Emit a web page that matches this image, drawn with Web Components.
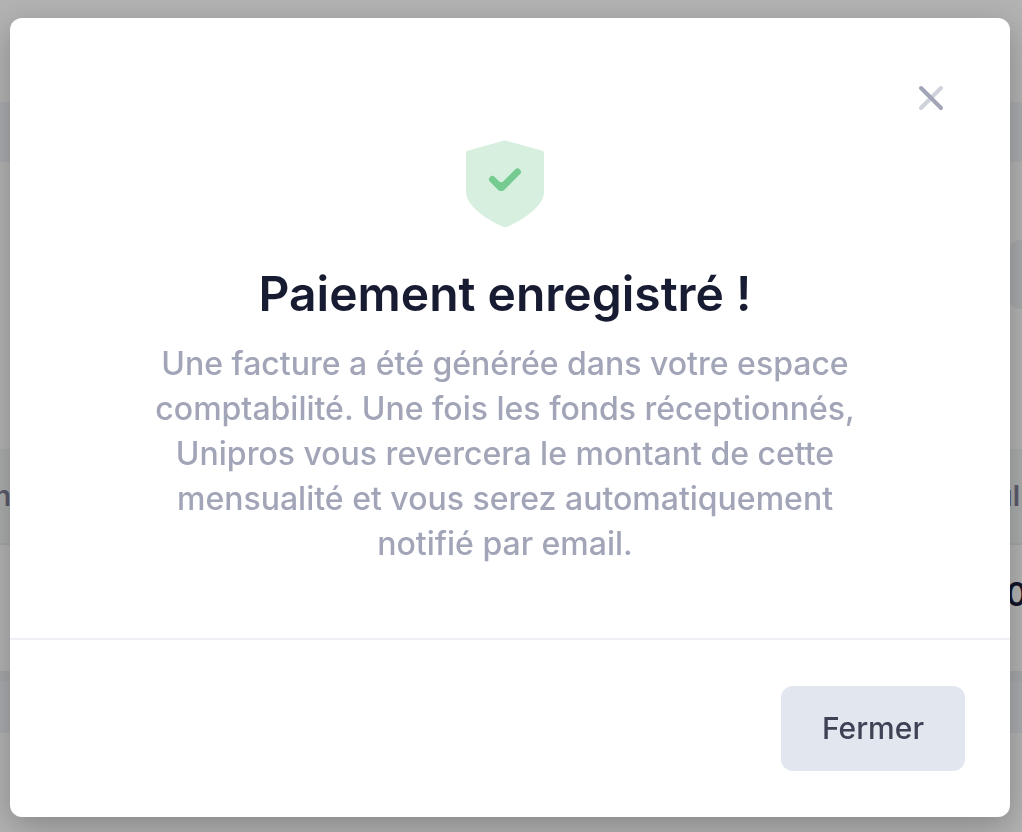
<!DOCTYPE html>
<html lang="fr">
<head>
<meta charset="utf-8">
<meta name="viewport" content="width=device-width, initial-scale=1">
<title>Paiement enregistré</title>
<style>
	body {
		margin: 0;
		min-height: 100vh;
		overflow: hidden;
		font-family: Inter, "Open Sans", "Liberation Sans", sans-serif;
		background: #b3b3b3;
	}
</style>
</head>
<body>
<page-backdrop></page-backdrop>
<payment-modal>
	<span slot="title">Paiement enregistré !</span>
	<span slot="message">Une facture a été générée dans votre espace comptabilité. Une fois les fonds réceptionnés, Unipros vous revercera le montant de cette mensualité et vous serez automatiquement notifié par email.</span>
	<modal-button slot="actions">Fermer</modal-button>
</payment-modal>

<script>
class PageBackdrop extends HTMLElement {
	constructor() {
		super();
		this.attachShadow({ mode: "open" });
	}

	connectedCallback() {
		this.shadowRoot.innerHTML = `
		<style>
		:host {
			display: flex;
			flex-direction: column;
			height: 100vh;
			overflow: hidden;
		}
		.top { height: 102px; }
		.band { height: 60px; background: #a9abae; }
		.filters {
			display: flex;
			justify-content: flex-end;
			height: 209px;
			padding-top: 78px;
		}
		.pill {
			width: 14px;
			height: 69px;
			border-radius: 12px 0 0 12px;
			background: #a8aaac;
		}
		.row {
			display: flex;
			align-items: center;
			justify-content: space-between;
			box-sizing: border-box;
		}
		.head {
			height: 96px;
			border-bottom: 2px solid #a5a7a7;
			background: #abadac;
			color: #5b5a6c;
			font-size: 28px;
			font-weight: 600;
		}
		.first { margin-left: -6px; }
		.last { margin-right: 2px; }
		.line {
			height: 126px;
			padding-bottom: 28px;
			justify-content: flex-end;
			color: #14142b;
			font-size: 32px;
			font-weight: 600;
		}
		.amount { margin-right: -5px; }
		.foot {
			height: 62px;
			box-sizing: border-box;
			border-top: 10px solid #a6a7a9;
			background: #a9abae;
		}
		</style>

		<div class="top"></div>
		<div class="band"></div>
		<div class="filters"><div class="pill"></div></div>
		<div class="row head"><span class="first">n</span><span class="last">ul</span></div>
		<div class="row line"><span class="amount">0</span></div>
		<div class="foot"></div>`;
	}
}

class ShieldIcon extends HTMLElement {
	constructor() {
		super();
		this.attachShadow({ mode: "open" });
	}

	connectedCallback() {
		this.shadowRoot.innerHTML = `
		<style>
		:host { display: block; }
		svg { display: block; }
		</style>
		<svg width="78" height="88" viewBox="0 0 78 88" fill="none" aria-hidden="true">
			<path fill="#d7efdf" d="M1.5 10.7 37.5.8q1.5-.5 3 0l36 9.900q1.500.500 1.500 2V52C78 66 57 80 41.500 86.600q-2.500 1-5 0C21 80 0 66 0 52V12.700q0-1.500 1.500-2Z"/>
			<path fill="#75cb90" d="M24 37a3.400 3.400 0 0 1 4.800 0l4.400 4.400q2 1.600 4 0L49.300 29.300a3.400 3.400 0 0 1 4.800 4.800L38.200 49.900q-3 2.400-6 0L24 41.800a3.400 3.400 0 0 1 0-4.800Z"/>
		</svg>`;
	}
}

class ModalButton extends HTMLElement {
	constructor() {
		super();
		this.attachShadow({ mode: "open" });
	}

	connectedCallback() {
		this.shadowRoot.innerHTML = `
		<style>
		:host { display: block; }
		button {
			display: block;
			padding: 20px 41px;
			border: 0;
			border-radius: 12px;
			background: #e2e6ee;
			color: #3f4254;
			font: 500 30px/45px Inter, "Open Sans", sans-serif;
			cursor: pointer;
		}
		</style>
		<button type="button"><slot></slot></button>`;
	}
}

class PaymentModal extends HTMLElement {
	constructor() {
		super();
		this.attachShadow({ mode: "open" });
	}

	connectedCallback() {
		this.shadowRoot.innerHTML = `
		<style>
		* { box-sizing: border-box; }
		:host {
			position: fixed;
			inset: 0;
			display: block;
			padding: 18px 12px 15px 10px;
		}
		.dialog {
			border-radius: 12px;
			background: #fff;
			box-shadow: 0 9px 32px rgba(0, 0, 0, 0.25);
		}
		header {
			display: flex;
			justify-content: flex-end;
			padding: 60px 59px 0;
		}
		.close {
			display: flex;
			align-items: center;
			justify-content: center;
			width: 40px;
			height: 40px;
			padding: 0;
			border: 0;
			background: none;
			cursor: pointer;
		}
		.body {
			display: flex;
			flex-direction: column;
			align-items: center;
			padding: 22px 150px 72px 140px;
			text-align: center;
		}
		h1 {
			margin: 31px 0 12px;
			color: #181c32;
			font-size: 48px;
			font-weight: 600;
			line-height: 70px;
		}
		p {
			margin: 0;
			color: #a1a5b7;
			font-size: 32px;
			font-weight: 500;
			line-height: 45px;
		}
		footer {
			display: flex;
			justify-content: flex-end;
			padding: 46px 45px;
			border-top: 2px solid #eff0f6;
		}
		</style>

		<div class="dialog" role="dialog" aria-modal="true" aria-labelledby="title">
			<header>
				<button class="close" type="button" aria-label="Fermer">
					<svg width="26" height="26" viewBox="0 0 26 26" fill="none" stroke="#a1a5b7" stroke-width="4" stroke-linecap="round">
						<path d="M23 3 3 23" opacity=".5"/>
						<path d="m3 3 20 20"/>
					</svg>
				</button>
			</header>
			<div class="body">
				<shield-icon></shield-icon>
				<h1 id="title"><slot name="title"></slot></h1>
				<p><slot name="message"></slot></p>
			</div>
			<footer><slot name="actions"></slot></footer>
		</div>`;
	}
}

customElements.define("page-backdrop", PageBackdrop);
customElements.define("shield-icon", ShieldIcon);
customElements.define("modal-button", ModalButton);
customElements.define("payment-modal", PaymentModal);
</script>
</body>
</html>
